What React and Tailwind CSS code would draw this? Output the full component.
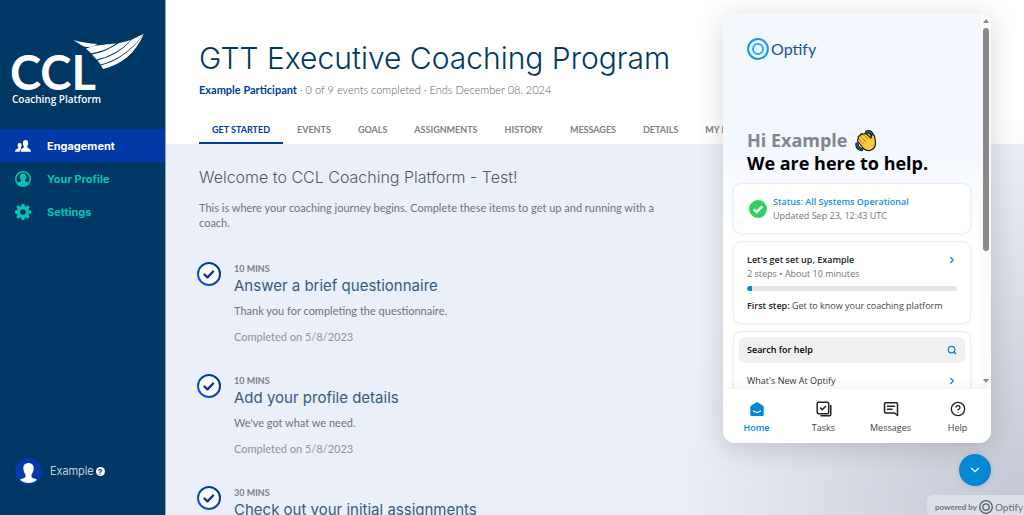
import React, { useState } from 'react';
import { ChevronRight, ChevronDown, Search, CircleHelp } from 'lucide-react';

const tabs = ['GET STARTED', 'EVENTS', 'GOALS', 'ASSIGNMENTS', 'HISTORY', 'MESSAGES', 'DETAILS', 'MY INFO'];

const steps = [
    { time: '10 MINS', title: 'Answer a brief questionnaire', note: 'Thank you for completing the questionnaire.', done: 'Completed on 5/8/2023' },
    { time: '10 MINS', title: 'Add your profile details', note: "We've got what we need.", done: 'Completed on 5/8/2023' },
    { time: '30 MINS', title: 'Check out your initial assignments' },
];

const CclLogo = () => (
    <svg width="136" height="76" viewBox="10 32 136 76" fill="#fff" role="img" aria-label="CCL Coaching Platform">
        <text x="10" y="90" fontSize="47" fontWeight="700" fontFamily="Lato, sans-serif">CCL</text>
        <text x="12" y="103" fontSize="10" fontWeight="600" fontFamily="'Open Sans', sans-serif">Coaching Platform</text>
        <path d="M73.500 40 Q84 43 97.500 44 L93 46.500 Q86 48 82 45.500 Z" />
        <path d="M86 48.500 Q98 44.500 116 43.600 Q106 51 91 53.300 Z" />
        <path d="M92 54.500 Q106 52 118 43.500 L131 40 Q117 55 96.500 59.500 Z" />
        <path d="M97.500 60.500 Q119 55 132 39.500 L143.500 34 Q126 58 100.500 64.500 Z" />
        <path d="M101 65.500 Q127 58.500 144 33.500 Q132 62 103 69 Z" />
    </svg>
);

const PeopleIcon = () => (
    <svg width="16" height="12" viewBox="0 0 16 12" fill="currentColor" aria-hidden="true">
        <path d="M10.500 0 C12.500 0 13.500 1.500 13.200 3.600 C13 5.200 12.500 6 12.200 6.400 C12.200 8.300 15.900 8.300 16 11.800 L5.600 11.800 C5.700 8.300 9 8.300 8.900 6.400 C8.200 5.600 7.900 4.600 7.900 3.300 C7.900 1.200 8.700 0 10.500 0Z" />
        <path d="M4.600 3 C6 3 6.800 4 6.600 5.500 C6.500 6.700 6 7.100 5.900 7.600 C5.900 8.300 6.400 8.500 6.500 8.700 C5 9.600 4.700 10.400 4.500 11.800 L0 11.800 C0.200 9.100 3.300 9.100 3.400 7.600 C2.800 7 2.600 6.200 2.600 5.300 C2.600 3.900 3.400 3 4.600 3Z" />
    </svg>
);

const ProfileIcon = () => (
    <svg width="16" height="16" viewBox="0 0 16 16" aria-hidden="true">
        <circle cx="8" cy="8" r="7.200" fill="none" stroke="currentColor" strokeWidth="1.600" />
        <path d="M8 2.600 C10.300 2.600 11.500 4.100 11.100 6.500 C10.900 8 10.200 8.600 9.900 9.200 C9.900 10.800 12.500 10.600 14 11.800 A7.200 7.200 0 0 1 2 11.800 C3.500 10.600 6.100 10.800 6.100 9.200 C5.800 8.600 5.100 8 4.900 6.500 C4.500 4.100 5.700 2.600 8 2.600Z" fill="currentColor" />
    </svg>
);

const GearIcon = () => (
    <svg width="16" height="16" viewBox="0 0 16 16" aria-hidden="true">
        <g fill="currentColor">
            <path d="M6.600 0 H9.400 L10 3 H6Z M6.600 16 H9.400 L10 13 H6Z M0 6.600 V9.400 L3 10 V6Z M16 6.600 V9.400 L13 10 V6Z" />
            <path d="M6.600 0 H9.400 L10 3 H6Z M6.600 16 H9.400 L10 13 H6Z M0 6.600 V9.400 L3 10 V6Z M16 6.600 V9.400 L13 10 V6Z" transform="rotate(45 8 8)" />
        </g>
        <circle cx="8" cy="8" r="4.400" fill="none" stroke="currentColor" strokeWidth="3.200" />
    </svg>
);

const Avatar = () => (
    <svg width="27" height="27" viewBox="0 0 27 27" aria-hidden="true">
        <circle cx="13.500" cy="13.500" r="13.500" fill="#0439ab" />
        <path d="M13.500 5 C17 5 19 7.200 18.600 11 C18.300 14 17.300 15.500 16.500 16.500 L16.500 18.500 C16.500 20.500 20 20 22 21.800 Q18.500 25 13.500 25 Q8.500 25 5 21.800 C7 20 10.500 20.500 10.500 18.500 L10.500 16.500 C9.700 15.500 8.700 14 8.400 11 C8 7.200 10 5 13.500 5Z" fill="#fff" />
    </svg>
);

const StepCheck = () => (
    <svg className="shrink-0" width="24" height="24" viewBox="0 0 24 24" fill="none" aria-hidden="true">
        <defs>
            <linearGradient id="ring" x1="1" y1="0" x2="0" y2="1">
                <stop offset="0" stopColor="#032f7e" />
                <stop offset="1" stopColor="#0a5be0" />
            </linearGradient>
        </defs>
        <circle cx="12" cy="12" r="11" fill="#fff" stroke="url(#ring)" strokeWidth="2" />
        <path d="M7.500 12.600 L10.500 15.400 L16.200 9.500" stroke="#0b3aa5" strokeWidth="2.400" strokeLinecap="round" strokeLinejoin="round" />
    </svg>
);

const WavingHand = () => (
    <svg width="22" height="22" viewBox="0 0 22 22" strokeLinecap="round" strokeLinejoin="round" role="img" aria-label="waving hand">
        <path d="M12 2 Q16 1 17.500 6 M2 14 Q2 18.500 6.500 19.500" stroke="#1b1b1b" strokeWidth="3.600" fill="none" />
        <path d="M12 2 Q16 1 17.500 6 M2 14 Q2 18.500 6.500 19.500" stroke="#1d5766" strokeWidth="2" fill="none" />
        <path d="M2.500 11 Q2 9.500 3.500 9 L3 7.500 Q3 5.500 5 6 L5.500 4.500 Q7 3 8.500 4.500 Q10 2.500 11.500 4 L16 8 L16.500 5.500 Q18 3.500 19.500 6 L20.500 12 Q21 18.500 15 20.500 Q11 21 8.500 18.500 Z" fill="#ffc83d" stroke="#1b1b1b" strokeWidth="1.200" />
        <path d="M5 6 L10.500 11.500 M8.500 4.500 L13 9 M3.500 9 L8.500 14" stroke="#a8741a" strokeWidth="0.900" fill="none" />
    </svg>
);

const OptifyMark = ({ size, outer, inner }) => (
    <svg className="shrink-0" width={size} height={size} viewBox="0 0 22 22" fill="none" aria-hidden="true">
        <circle cx="11" cy="11" r="9.900" stroke={outer} strokeWidth="2" />
        <circle cx="11" cy="11" r="5" stroke={inner} strokeWidth="2" />
    </svg>
);

const HomeIcon = () => (
    <svg width="16" height="16" viewBox="0 0 16 16" aria-hidden="true">
        <path d="M8 1 L14 4.700 Q14.700 5.200 14.700 6 V13.500 Q14.700 15 13.200 15 H2.800 Q1.300 15 1.300 13.500 V6 Q1.300 5.200 2 4.700Z" fill="#0487d4" />
        <path d="M4.500 10 Q8 12.600 11.500 10" fill="none" stroke="#fff" strokeWidth="1.200" strokeLinecap="round" />
    </svg>
);

const TasksIcon = () => (
    <svg width="16" height="16" viewBox="0 0 16 16" fill="none" stroke="#222" strokeWidth="1.500" strokeLinecap="round" strokeLinejoin="round" aria-hidden="true">
        <rect x="1.200" y="1.200" width="11.500" height="11.500" rx="1.500" />
        <path d="M4.500 7 L6.300 8.700 L9.500 5.400" />
        <path d="M14.800 4.500 V13 Q14.800 14.800 13 14.800 H5" />
    </svg>
);

const MessagesIcon = () => (
    <svg width="16" height="16" viewBox="0 0 16 16" fill="none" stroke="#222" strokeWidth="1.500" strokeLinecap="round" strokeLinejoin="round" aria-hidden="true">
        <path d="M2.500 1.800 H13.500 Q14.500 1.800 14.500 2.800 V14.500 L11.500 12 H2.500 Q1.500 12 1.500 11 V2.800 Q1.500 1.800 2.500 1.800Z" />
        <path d="M4.500 5.200 H11.500 M4.500 8.300 H9" />
    </svg>
);

const navItems = [
    { label: 'Engagement', icon: PeopleIcon },
    { label: 'Your Profile', icon: ProfileIcon },
    { label: 'Settings', icon: GearIcon },
];

const Sidebar = () => (
    <aside className="w-[166px] shrink-0 bg-[#003865] flex flex-col border-r border-[#8fa9c4]">
        <div className="pt-8 pb-[21px] pl-[10px]"><CclLogo /></div>
        <nav className="flex flex-col">
            {navItems.map(({ label, icon: Icon }, i) => (
                <a
                    key={label}
                    href="#"
                    className={`h-[33px] flex items-center pl-[15px] gap-4 text-[11px] leading-4 font-bold ${i === 0 ? 'bg-[#0039a6] text-white' : 'text-[#02c4b4]'}`}
                >
                    <Icon />
                    {label}
                </a>
            ))}
        </nav>
        <div className="mt-auto mb-[30px] pl-[15px] flex items-center gap-2 text-[11px] text-[#e4ebf2]">
            <Avatar />
            <div className="flex items-center gap-[2px] font-light">
                Example
                <span className="w-[9px] h-[9px] rounded-full bg-white text-[#003865] text-[8px] leading-none font-bold flex items-center justify-center">?</span>
            </div>
        </div>
    </aside>
);

const Step = ({ step }) => (
    <li className="flex gap-[13px] h-[112px]">
        <StepCheck />
        <div className="pt-px">
            <p className="font-['Lato',sans-serif] text-[9px] leading-3 font-bold text-[#7d8288]">{step.time}</p>
            <h3 className="text-[15px] leading-[22px] text-[#335c81]">{step.title}</h3>
            <p className="mt-[6px] font-['Lato',sans-serif] text-[11px] leading-4 text-[#6f747b]">{step.note}</p>
            <p className="mt-[10px] font-['Lato',sans-serif] text-[11px] leading-4 text-[#8f949b]">{step.done}</p>
        </div>
    </li>
);

const card = 'rounded-lg bg-white border border-[#e9ecf0] shadow-[0_1px_4px_rgba(0,0,0,0.05)]';

const HelpWidget = () => {
    const [active, setActive] = useState('Home');
    const footer = [
        { label: 'Home', icon: <HomeIcon /> },
        { label: 'Tasks', icon: <TasksIcon /> },
        { label: 'Messages', icon: <MessagesIcon /> },
        { label: 'Help', icon: <CircleHelp size={16} strokeWidth={2} color="#222" /> },
    ];

    return (
        <section className="absolute right-[33px] top-[13px] bottom-[72px] w-[268px] rounded-xl overflow-hidden bg-white flex flex-col shadow-[0_4px_28px_rgba(0,0,0,0.16)] font-['Open_Sans',sans-serif]">
            <div className="flex-1 min-h-0 flex">
                <div className="flex-1 min-w-0 overflow-hidden px-[10px] bg-linear-to-b from-[#f3f8ff] from-35% to-white to-60%">
                    <div className="h-[116px] pt-[25px] pl-[14px] flex items-start">
                        <div className="flex items-center gap-[2px] text-[16px] leading-[22px] text-[#1d4f96] font-['Lato',sans-serif]">
                            <OptifyMark size={22} outer="#1597ee" inner="#19b5e8" />
                            Optify
                        </div>
                    </div>
                    <div className="pl-[14px] text-[18px] leading-[23px] font-bold text-black">
                        <p className="flex items-center gap-[7px] text-[#81868d]">Hi Example <WavingHand /></p>
                        <p>We are here to help.</p>
                    </div>
                    <div className={`${card} mt-2 h-[51px] px-[15px] flex items-center gap-[6px]`}>
                        <svg width="18" height="18" viewBox="0 0 18 18" fill="none" aria-hidden="true">
                            <circle cx="9" cy="9" r="9" fill="#2fce65" />
                            <path d="M4.800 9.300 L7.800 12 L13.200 6.300" stroke="#fff" strokeWidth="2.400" />
                        </svg>
                        <div className="text-[9px] leading-[14px]">
                            <p className="font-semibold text-[#1b8fd8]">Status: All Systems Operational</p>
                            <p className="text-[#73767a]">Updated Sep 23, 12:43 UTC</p>
                        </div>
                    </div>
                    <div className={`${card} mt-[7px] h-[83px] px-[13px] pt-[11px] text-[9px] leading-[14px]`}>
                        <div className="flex items-center justify-between font-semibold text-[#222]">
                            Let's get set up, Example
                            <ChevronRight size={10} strokeWidth={3} color="#0487d4" />
                        </div>
                        <p className="text-[#73767a]">2 steps • About 10 minutes</p>
                        <div className="mt-[5px] h-[5px] rounded-full bg-[#e4e4e4] overflow-hidden">
                            <div className="w-[5px] h-full rounded-l-full bg-[#0487d4]" />
                        </div>
                        <p className="mt-2 text-[#444]"><span className="font-semibold text-[#222]">First step:</span> Get to know your coaching platform</p>
                    </div>
                    <div className={`${card} mt-[7px] p-[5px] text-[9px] leading-[14px]`}>
                        <button className="w-full h-[26px] px-2 rounded-md bg-[#f0f0f0] flex items-center justify-between font-semibold text-black">
                            Search for help
                            <Search size={10} strokeWidth={3} color="#0487d4" />
                        </button>
                        <a href="#" className="h-9 px-2 flex items-center justify-between text-[#333]">
                            What's New At Optify
                            <ChevronRight size={10} strokeWidth={3} color="#0487d4" />
                        </a>
                    </div>
                </div>
                <div className="w-[10px] bg-[#fbfbfc] py-[6px] flex flex-col items-center" aria-hidden="true">
                    <svg width="6" height="4" viewBox="0 0 6 4"><path d="M0 4 L3 0 L6 4Z" fill="#898989" /></svg>
                    <div className="w-[6px] h-[223px] mt-[5px] rounded-full bg-[#898989]" />
                    <div className="flex-1" />
                    <svg width="6" height="4" viewBox="0 0 6 4"><path d="M0 0 L3 4 L6 0Z" fill="#898989" /></svg>
                </div>
            </div>
            <div className="h-[54px] shrink-0 pt-1 grid grid-cols-4 bg-white shadow-[0_0_12px_rgba(0,0,0,0.08)]">
                {footer.map(({ label, icon }) => (
                    <button
                        key={label}
                        onClick={() => setActive(label)}
                        className={`flex flex-col items-center justify-center gap-1 text-[9px] leading-[14px] ${active === label ? 'font-semibold text-[#0487d4]' : 'text-[#444]'}`}
                    >
                        {icon}
                        {label}
                    </button>
                ))}
            </div>
        </section>
    );
};

const App = () => {
    return (
        <div className="relative h-screen flex overflow-hidden font-['Inter',sans-serif]">
            <Sidebar />
            <main className="flex-1 min-w-0 flex flex-col">
                <header className="h-36 shrink-0 pl-[33px] bg-white flex flex-col">
                    <h1 className="mt-[38px] text-[30px] leading-10 font-light text-[#003865] whitespace-nowrap">GTT Executive Coaching Program</h1>
                    <p className="mt-1 font-['Lato',sans-serif] text-[11px] leading-4 font-light text-[#5c6168]">
                        <b className="font-bold text-[#0039a6]">Example Participant</b> · 0 of 9 events completed · Ends December 08, 2024
                    </p>
                    <nav className="mt-auto flex gap-px">
                        {tabs.map((tab, i) => (
                            <a
                                key={tab}
                                href="#"
                                className={`h-[27px] pt-[7px] px-[13px] font-['Lato',sans-serif] text-[9px] leading-3 font-bold whitespace-nowrap border-b-2 ${i === 0 ? 'text-[#0039a6] border-[#0039a6]' : 'text-[#7d8288] border-transparent'}`}
                            >
                                {tab}
                            </a>
                        ))}
                    </nav>
                </header>
                <div className="flex-1 min-h-0 overflow-hidden pl-[33px] pt-[22px] bg-[#ebeff8]">
                    <h2 className="text-[16px] leading-[22px] font-light text-[#55595f]">Welcome to CCL Coaching Platform - Test!</h2>
                    <p className="mt-3 max-w-[480px] font-['Lato',sans-serif] text-[11px] leading-[15px] text-[#6f747b]">
                        This is where your coaching journey begins. Complete these items to get up and running with a coach.
                    </p>
                    <ul className="mt-8 -ml-[2px]">
                        {steps.map((step, i) => <Step key={i} step={step} />)}
                    </ul>
                </div>
            </main>

            {/* soft shade behind the help widget */}
            <div className="absolute right-0 bottom-0 w-[360px] h-[400px] pointer-events-none bg-[radial-gradient(ellipse_at_bottom_right,rgba(29,39,54,0.2)_0%,rgba(29,39,54,0)_70%)]" />
            <HelpWidget />
            <button aria-label="Close help" className="absolute right-[33px] bottom-[29px] w-8 h-8 rounded-full bg-[#0487d4] flex items-center justify-center shadow-[0_1px_6px_rgba(0,0,0,0.1)]">
                <ChevronDown size={14} strokeWidth={2} color="#fff" />
            </button>
            <a href="#" className="absolute right-0 bottom-0 w-[97px] h-5 rounded-tl-md bg-[#dbe0e8] pl-2 pt-1 flex items-center gap-[2px] whitespace-nowrap text-[8px] leading-3 font-bold text-[#6c727c] font-['Lato',sans-serif]">
                powered by
                <OptifyMark size={14} outer="#555c67" inner="#555c67" />
                <span className="text-[10px] font-normal">Optify</span>
            </a>
        </div>
    );
};

export default App;
